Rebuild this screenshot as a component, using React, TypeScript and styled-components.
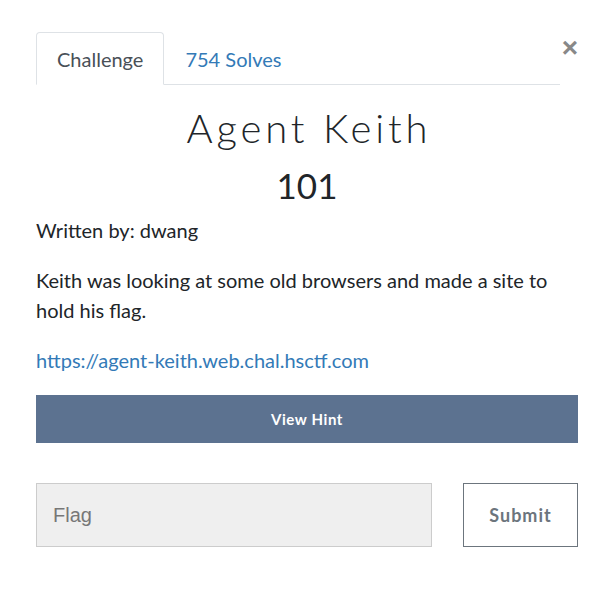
import React from "react";
import styled, { createGlobalStyle } from "styled-components";

const Global = createGlobalStyle`
  html, body { margin: 0; padding: 0; background: #fff; }
  body { font-family: Lato, "Open Sans", sans-serif; color: #212529; }
  * { box-sizing: border-box; }
`;

const Modal = styled.div`
  width: 602px;
  padding: 32px 24px 40px 36px;
`;

const Header = styled.div`
  display: flex;
  align-items: flex-start;
`;

const Tabs = styled.nav`
  flex: 1;
  display: flex;
  border-bottom: 1px solid #dee2e6;
`;

const Tab = styled.div<{ $active?: boolean }>`
  padding: 0 20px;
  height: 53px;
  margin-bottom: -1px;
  display: flex;
  align-items: center;
  font-size: 20px;
  border: 1px solid ${(p) => (p.$active ? "#dee2e6" : "transparent")};
  border-bottom-color: ${(p) => (p.$active ? "#fff" : "transparent")};
  border-radius: 4px 4px 0 0;
  color: ${(p) => (p.$active ? "#495057" : "#337ab7")};
`;

const Close = styled.button`
  width: 18px;
  margin-top: 2px;
  padding: 0;
  border: 0;
  background: none;
  font-family: "Liberation Sans", Arial, sans-serif;
  font-size: 28px;
  font-weight: 700;
  line-height: 28px;
  color: #888;
  text-align: right;
`;

const Title = styled.h1`
  margin: 19px 0 0;
  text-align: center;
  font-family: Lato, sans-serif;
  font-weight: 300;
  font-size: 40px;
  line-height: 48px;
  letter-spacing: 3.8px;
  text-indent: 3.8px;
  color: #212529;
`;

const Value = styled.h2`
  margin: 12px 0 0;
  text-align: center;
  font-weight: 400;
  font-size: 35px;
  line-height: 42px;
  color: #212529;
`;

const Text = styled.p`
  margin: 0 0 20px;
  font-size: 20px;
  line-height: 30px;
  color: #212529;
`;

const Author = styled(Text)`
  margin: 9px 0 20px;
`;

const Link = styled.a`
  color: #337ab7;
  text-decoration: none;
`;

const HintButton = styled.button`
  display: block;
  width: 100%;
  height: 48px;
  border: 0;
  background: #5c7290;
  color: #fff;
  font-family: Lato, sans-serif;
  font-weight: 700;
  font-size: 15px;
  letter-spacing: 0.6px;
`;

const SubmitRow = styled.div`
  display: flex;
  gap: 31px;
  margin-top: 40px;
`;

const FlagInput = styled.input`
  flex: 1;
  height: 64px;
  padding: 0 16px;
  border: 1px solid #ccc;
  background: #efefef;
  font-family: "Liberation Sans", Arial, sans-serif;
  font-size: 20px;
  color: #333;
  &::placeholder { color: #777; }
`;

const SubmitButton = styled.button`
  width: 115px;
  height: 64px;
  border: 1px solid #6c757d;
  background: #fff;
  color: #6c757d;
  font-family: Lato, sans-serif;
  font-weight: 700;
  font-size: 18px;
  letter-spacing: 1px;
`;

export default function App() {
  return (
    <>
      <Global />
      <Modal>
        <Header>
          <Tabs>
            <Tab $active>Challenge</Tab>
            <Tab>754 Solves</Tab>
          </Tabs>
          <Close aria-label="Close">×</Close>
        </Header>
        <Title>Agent Keith</Title>
        <Value>101</Value>
        <Author>Written by: dwang</Author>
        <Text>Keith was looking at some old browsers and made a site to hold his flag.</Text>
        <Text>
          <Link href="#">https://agent-keith.web.chal.hsctf.com</Link>
        </Text>
        <HintButton>View Hint</HintButton>
        <SubmitRow>
          <FlagInput placeholder="Flag" />
          <SubmitButton>Submit</SubmitButton>
        </SubmitRow>
      </Modal>
    </>
  );
}
